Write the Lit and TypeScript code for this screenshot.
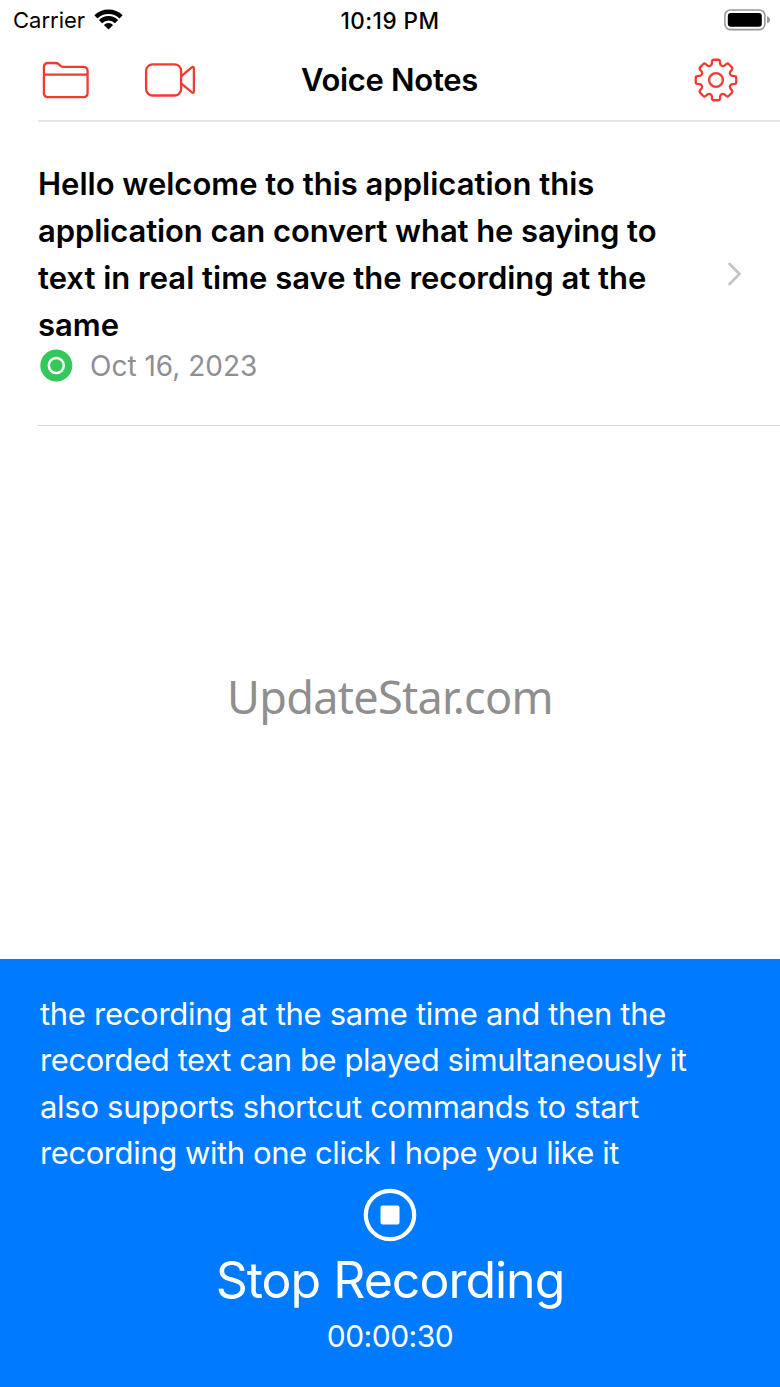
import { LitElement, html, css } from 'lit';
import { customElement, property } from 'lit/decorators.js';

// outline of the settings gear: eight teeth with rounded corners
const gearPath = () => {
  const points: number[][] = [];
  for (let i = 0; i < 8; i++) {
    const polar = [[15.4, -16.5], [20.6, -10.5], [20.6, 10.5], [15.4, 16.5]];
    for (const [r, deg] of polar) {
      const a = ((i * 45 + deg - 90) * Math.PI) / 180;
      points.push([22 + r * Math.cos(a), 22 + r * Math.sin(a)]);
    }
  }
  const toward = (p: number[], q: number[], d: number) => {
    const len = Math.hypot(q[0] - p[0], q[1] - p[1]);
    return [p[0] + ((q[0] - p[0]) * d) / len, p[1] + ((q[1] - p[1]) * d) / len];
  };
  return points
    .map((p, i) => {
      const before = toward(p, points[(i + 31) % 32], 1.4);
      const after = toward(p, points[(i + 1) % 32], 1.4);
      return `${i ? 'L' : 'M'}${before.join(' ')}Q${p.join(' ')} ${after.join(' ')}`;
    })
    .join('') + 'Z';
};

@customElement('status-bar')
class StatusBar extends LitElement {
  static styles = css`
    :host {
      display: grid;
      grid-template-columns: 1fr auto 1fr;
      align-items: center;
      height: 40px;
      padding: 0 10px 0 13px;
      box-sizing: border-box;
    }

    .carrier {
      display: flex;
      align-items: center;
      gap: 9px;
      font-size: 22px;
    }

    .carrier svg {
      margin-bottom: 2px;
    }

    .time {
      padding-right: 3px;
      font-size: 22.5px;
      font-weight: 500;
      letter-spacing: 0.5px;
    }

    .battery {
      justify-self: end;
      margin-bottom: 1px;
    }

    svg {
      display: block;
    }
  `;

  render() {
    return html`
      <div class="carrier">
        <span>Carrier</span>
        <svg width="29" height="22" viewBox="0 0 29 22">
          <path d="M0.3 7.2A20.4 20.4 0 0 1 28.7 7.2L25.5 10.5A15.8 15.8 0 0 0 3.5 10.5Z" />
          <path d="M4.9 11.9A13.8 13.8 0 0 1 24.1 11.9L20.9 15.2A9.2 9.2 0 0 0 8.1 15.2Z" />
          <path d="M9.9 16.9A6.6 6.6 0 0 1 19.1 16.9L14.5 21.5Z" />
        </svg>
      </div>
      <div class="time">10:19 PM</div>
      <svg class="battery" width="46" height="22" viewBox="0 0 46 22">
        <rect x="0.9" y="1" width="40" height="19.6" rx="5.5" fill="none" stroke="#979797" stroke-width="1.6" />
        <rect x="3.8" y="4" width="34" height="13.8" rx="3" />
        <path d="M43 7.3Q46 8.3 46 10.8T43 14.3Z" fill="#979797" />
      </svg>
    `;
  }
}

@customElement('nav-bar')
class NavBar extends LitElement {
  static styles = css`
    :host {
      display: grid;
      grid-template-columns: 1fr auto 1fr;
      align-items: center;
      height: 82px;
      margin-left: 38px;
      padding: 0 42px 1px 3px;
      box-sizing: border-box;
      border-bottom: 2px solid #e6e6e6;
    }

    .actions {
      display: flex;
      align-items: center;
      gap: 54px;
    }

    h1 {
      margin: 0;
      padding-top: 1px;
      font-size: 31px;
      line-height: 40px;
      font-weight: 600;
      letter-spacing: -0.3px;
    }

    .settings {
      justify-self: end;
    }

    svg {
      display: block;
      fill: none;
      stroke: #f23b30;
      stroke-width: 2.3;
      stroke-linejoin: round;
    }
  `;

  render() {
    return html`
      <div class="actions">
        <svg width="49" height="40" viewBox="0 0 49 40">
          <path d="M2.9 34V7.4Q2.9 3 7.3 3H14.5Q16.3 3 17.6 4.1L19.5 5.8Q20.8 6.9 22.6 6.9H42.2Q46.6 6.9 46.6 11.3V33Q46.6 37.2 42.2 37.2H7.1Q2.9 37.2 2.9 33ZM2.9 14.6H46.6" />
        </svg>
        <svg width="52" height="40" viewBox="0 0 52 40">
          <rect x="2.1" y="4.3" width="35" height="31.2" rx="6.5" />
          <path d="M37.1 16.3L47.7 7.4Q49.9 5.9 49.9 8.6V31Q49.9 33.7 47.7 32.2L37.1 23.4" />
        </svg>
      </div>
      <h1>Voice Notes</h1>
      <svg class="settings" width="44" height="44" viewBox="0 0 44 44">
        <path d=${gearPath()} />
        <circle cx="22" cy="22" r="6.9" />
      </svg>
    `;
  }
}

@customElement('note-item')
class NoteItem extends LitElement {
  static styles = css`
    :host {
      display: flex;
      align-items: center;
      justify-content: space-between;
      height: 304px;
      margin-left: 38px;
      padding-right: 37px;
      box-sizing: border-box;
      border-bottom: 1px solid #d8d8da;
    }

    .note {
      padding-bottom: 3px;
    }

    .title {
      font-size: 31px;
      line-height: 46.8px;
      font-weight: 600;
      white-space: nowrap;
    }

    .title div:nth-child(2) {
      letter-spacing: -0.1px;
    }

    .meta {
      display: flex;
      align-items: center;
      gap: 17px;
      height: 34px;
      padding-left: 2px;
      font-size: 28px;
      color: #8e8e93;
    }

    svg {
      display: block;
    }
  `;

  @property({ type: Array }) lines: string[] = [];
  @property() date = '';

  render() {
    return html`
      <div class="note">
        <div class="title">${this.lines.map((line) => html`<div>${line}</div>`)}</div>
        <div class="meta">
          <svg width="33" height="33" viewBox="0 0 33 33">
            <circle cx="16.3" cy="16.5" r="16" fill="#34c759" />
            <circle cx="16.3" cy="16.5" r="7.5" fill="none" stroke="#fff" stroke-width="2.5" />
          </svg>
          <span>${this.date}</span>
        </div>
      </div>
      <svg width="16" height="26" viewBox="0 0 16 26">
        <path d="M2.5 3L12.5 13L2.5 23" fill="none" stroke="#c4c4c6" stroke-width="2.8" stroke-linecap="round" stroke-linejoin="round" />
      </svg>
    `;
  }
}

@customElement('recorder-panel')
class RecorderPanel extends LitElement {
  static styles = css`
    :host {
      display: flex;
      flex-direction: column;
      align-items: center;
      height: 428px;
      padding: 32px 40px 0;
      box-sizing: border-box;
      background: #007aff;
      color: #fff;
    }

    .transcript {
      align-self: stretch;
      margin-bottom: 11px;
      font-size: 31px;
      line-height: 46.4px;
      letter-spacing: -0.3px;
      white-space: nowrap;
    }

    .transcript div:nth-child(2n) {
      letter-spacing: -0.42px;
    }

    .label {
      margin-top: 6px;
      font-size: 50px;
      line-height: 64px;
      letter-spacing: -1px;
    }

    .timer {
      margin-top: 7px;
      font-size: 30px;
      line-height: 34px;
      letter-spacing: -0.5px;
    }

    svg {
      display: block;
    }
  `;

  @property({ type: Array }) lines: string[] = [];
  @property() time = '';

  render() {
    return html`
      <div class="transcript">${this.lines.map((line) => html`<div>${line}</div>`)}</div>
      <svg width="54" height="54" viewBox="0 0 54 54">
        <circle cx="27" cy="27" r="24.2" fill="none" stroke="#fff" stroke-width="4.2" />
        <rect x="17.5" y="17.5" width="19" height="19" rx="2" fill="#fff" />
      </svg>
      <div class="label">Stop Recording</div>
      <div class="timer">${this.time}</div>
    `;
  }
}

@customElement('app-root')
class AppRoot extends LitElement {
  static styles = css`
    :host {
      display: flex;
      flex-direction: column;
      height: 1387px;
      background: #fff;
      color: #000;
      font-family: Inter, "Liberation Sans", sans-serif;
    }

    .empty {
      flex: 1;
      display: flex;
      justify-content: center;
      align-items: center;
      padding-top: 7px;
      font-family: "Noto Sans", "Open Sans", sans-serif;
      font-size: 45px;
      letter-spacing: -0.7px;
      color: #8f8f8f;
    }
  `;

  note = [
    'Hello welcome to this application this',
    'application can convert what he saying to',
    'text in real time save the recording at the',
    'same',
  ];

  transcript = [
    'the recording at the same time and then the',
    'recorded text can be played simultaneously it',
    'also supports shortcut commands to start',
    'recording with one click I hope you like it',
  ];

  render() {
    return html`
      <status-bar></status-bar>
      <nav-bar></nav-bar>
      <note-item .lines=${this.note} date="Oct 16, 2023"></note-item>
      <div class="empty">UpdateStar.com</div>
      <recorder-panel .lines=${this.transcript} time="00:00:30"></recorder-panel>
    `;
  }
}
